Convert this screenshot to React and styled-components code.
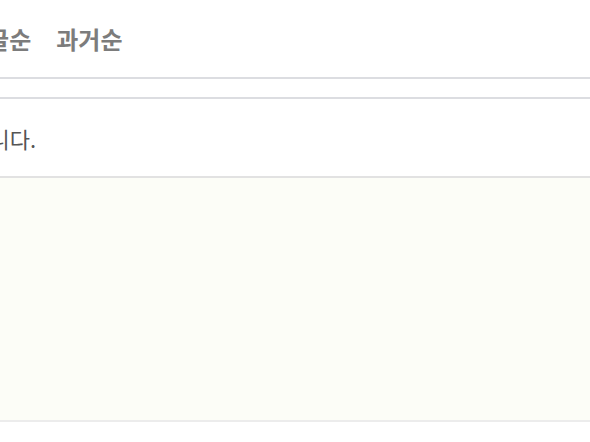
import React from "react";
import styled, { createGlobalStyle } from "styled-components";

const GlobalStyle = createGlobalStyle`
  body {
    margin: 0;
    background: #ffffff;
    font-family: "Noto Sans CJK KR", "Noto Sans", sans-serif;
    overflow: hidden;
  }
`;

const Page = styled.div`
  width: 100%;
  display: flex;
  flex-direction: column;
`;

const SortBar = styled.ul`
  margin: 0;
  padding: 0;
  list-style: none;
  height: 77px;
  display: flex;
  align-items: center;
  gap: 25px;
  border-bottom: 2px solid #dcdde1;
  overflow: hidden;
`;

const SortItem = styled.li`
  font-size: 24px;
  font-weight: 600;
  color: ${(p) => (p.active ? "#333333" : "#7c7c7c")};
  white-space: nowrap;
  flex-shrink: 0;
  &:first-child {
    margin-left: -35px;
  }
`;

const Spacer = styled.div`
  height: 18px;
  border-bottom: 2px solid #dcdde1;
`;

const NoticeRow = styled.div`
  height: 77px;
  display: flex;
  align-items: center;
  border-bottom: 2px solid #e2e2e2;
  overflow: hidden;
`;

const NoticeText = styled.p`
  margin: 0 0 0 -230px;
  width: 266px;
  flex-shrink: 0;
  text-align: right;
  font-size: 22px;
  color: #555555;
  white-space: nowrap;
`;

const EmptyPanel = styled.div`
  height: 242px;
  background: #fcfdf7;
  border-bottom: 2px solid #ececec;
`;

export default function App() {
  return (
    <>
      <GlobalStyle />
      <Page>
        <SortBar>
          <SortItem>댓글순</SortItem>
          <SortItem>과거순</SortItem>
        </SortBar>
        <Spacer />
        <NoticeRow>
          <NoticeText>등록된 댓글이 없습니다.</NoticeText>
        </NoticeRow>
        <EmptyPanel />
      </Page>
    </>
  );
}
